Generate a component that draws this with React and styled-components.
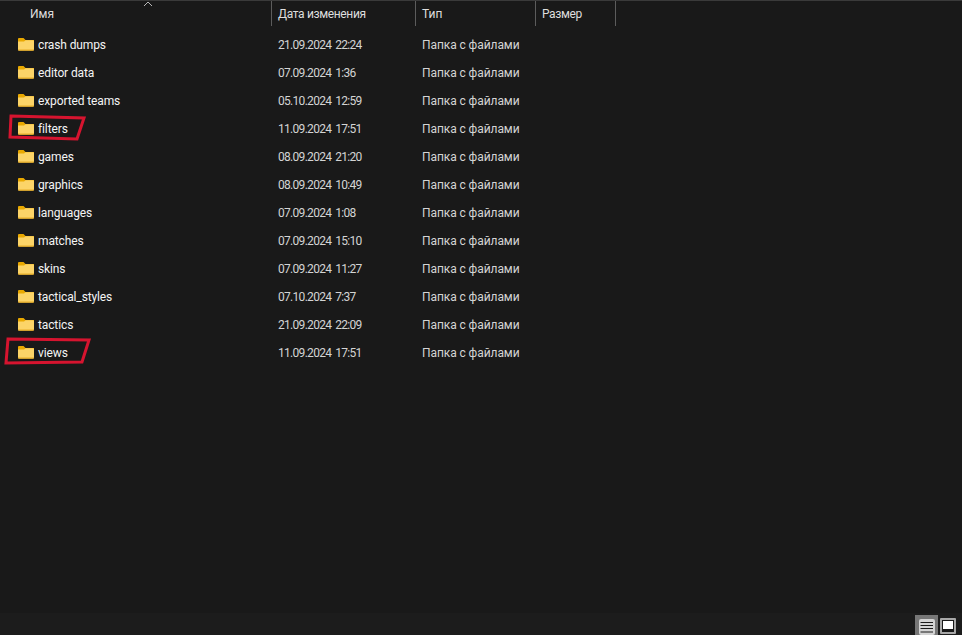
import React from 'react';
import styled, { createGlobalStyle } from 'styled-components';

const GlobalStyle = createGlobalStyle`
  html, body { margin: 0; padding: 0; height: 100%; background: #191919; overflow: hidden; }
  #root { height: 100%; }
`;

const Window = styled.div`
  position: relative;
  width: 962px;
  height: 635px;
  display: flex;
  flex-direction: column;
  background: #191919;
  color: #f0f0f0;
  font-family: Roboto, "Noto Sans", sans-serif;
  font-size: 12px;
  overflow: hidden;
`;
const Header = styled.div`
  display: flex;
  height: 25px;
  padding-left: 16px;
  border-top: 1px solid #3a3a3a;
  flex: none;
`;
const HeaderCell = styled.div`
  position: relative;
  width: ${({ w }) => w}px;
  box-sizing: border-box;
  padding-left: ${({ pad }) => pad}px;
  line-height: 27px;
  letter-spacing: ${({ spacing }) => spacing || 0}px;
  border-right: 1px solid #5c5c5c;
  color: #dedede;
  white-space: nowrap;
`;
const SortArrow = styled.svg`
  position: absolute;
  left: 127px;
  top: 0;
`;
const List = styled.div`
  flex: 1;
  padding-top: 5px;
`;
const Row = styled.div`
  display: flex;
  height: 28px;
  align-items: center;
  padding-left: 16px;
`;
const NameCell = styled.div`
  width: 256px;
  display: flex;
  align-items: center;
  gap: 4px;
  padding-left: 2px;
  box-sizing: border-box;
  color: #f4f4f4;
  letter-spacing: -0.12px;
`;
const DateCell = styled.div`
  width: 144px;
  padding-left: 6px;
  box-sizing: border-box;
  color: #d4d4d4;
  letter-spacing: -0.7px;
  word-spacing: 1.6px;
`;
const TypeCell = styled.div`
  width: 120px;
  padding-left: 6px;
  box-sizing: border-box;
  color: #d4d4d4;
  letter-spacing: -0.08px;
`;
const Footer = styled.div`
  flex: none;
  height: 22px;
  padding-right: 4px;
  display: flex;
  justify-content: flex-end;
  align-items: flex-end;
  background: #1c1c1c;
`;
const ViewButton = styled.div`
  width: ${({ w }) => w}px;
  height: 20px;
  padding: ${({ pt }) => pt}px 0 0 ${({ pl }) => pl}px;
  display: flex;
  align-items: flex-start;
  box-sizing: border-box;
  background: ${({ active }) => (active ? '#777777' : 'transparent')};
`;
const Marks = styled.svg`
  position: absolute;
  left: 0;
  top: 0;
  pointer-events: none;
`;

const rows = [
  ['crash dumps', '21.09.2024 22:24'],
  ['editor data', '07.09.2024 1:36'],
  ['exported teams', '05.10.2024 12:59'],
  ['filters', '11.09.2024 17:51'],
  ['games', '08.09.2024 21:20'],
  ['graphics', '08.09.2024 10:49'],
  ['languages', '07.09.2024 1:08'],
  ['matches', '07.09.2024 15:10'],
  ['skins', '07.09.2024 11:27'],
  ['tactical_styles', '07.10.2024 7:37'],
  ['tactics', '21.09.2024 22:09'],
  ['views', '11.09.2024 17:51'],
];

function FolderIcon() {
  return (
    <svg width="16" height="14" viewBox="0 0 16 14">
      <path d="M0 1 Q0 0 1 0 H5.5 L7.5 2 H16 V5 H0 Z" fill="#e9a800" />
      <path d="M0 3.5 H6 L7.5 2.2 H15 Q16 2.2 16 3.2 V11.5 Q16 12.5 15 12.5 H1 Q0 12.5 0 11.5 Z" fill="#fcd468" />
      <path d="M0 11.5 H16 V11.7 Q16 12.7 15 12.7 H1 Q0 12.7 0 11.7 Z" fill="#e8ae28" />
    </svg>
  );
}

function DetailsIcon() {
  return (
    <svg width="16" height="16" viewBox="0 0 16 16">
      <rect x="0" y="0" width="16" height="16" rx="2" fill="#d4d4d4" />
      <path d="M1.5 3.5H14M1.5 6.5H14M1.5 9.5H14M1.5 13H14" stroke="#1c1c1c" strokeWidth="1" />
    </svg>
  );
}

function TilesIcon() {
  return (
    <svg width="16" height="16" viewBox="0 0 16 16">
      <rect x="0" y="0" width="16" height="16" rx="1" fill="#a8a8a8" />
      <rect x="2" y="2" width="12" height="12" fill="#191919" />
      <rect x="3" y="3" width="10" height="8" fill="#ffffff" />
    </svg>
  );
}

export default function App() {
  return (
    <Window>
      <GlobalStyle />
      <Header>
        <HeaderCell w={256} pad={14}>
          Имя
          <SortArrow width="10" height="6" viewBox="0 0 10 6">
            <path d="M1 5 L5 1 L9 5" fill="none" stroke="#b8b8b8" strokeWidth="1" />
          </SortArrow>
        </HeaderCell>
        <HeaderCell w={144} pad={6} spacing={-0.35}>Дата изменения</HeaderCell>
        <HeaderCell w={120} pad={6}>Тип</HeaderCell>
        <HeaderCell w={80} pad={6} spacing={-0.4}>Размер</HeaderCell>
      </Header>
      <List>
        {rows.map(([name, date]) => (
          <Row key={name}>
            <NameCell>
              <FolderIcon />
              {name}
            </NameCell>
            <DateCell>{date}</DateCell>
            <TypeCell>Папка с файлами</TypeCell>
          </Row>
        ))}
      </List>
      <Footer>
        <ViewButton active w={23} pt={4} pl={4}><DetailsIcon /></ViewButton>
        <ViewButton w={20} pt={3} pl={2}><TilesIcon /></ViewButton>
      </Footer>
      <Marks width="962" height="635" viewBox="0 0 962 635">
        <path d="M11 116 L84 118 L77 139 L10 137 Z" fill="none" stroke="#d6142f" strokeWidth="3" />
        <path d="M8 339 L89 340 L82 362 L6 363 Z" fill="none" stroke="#d6142f" strokeWidth="3" />
      </Marks>
    </Window>
  );
}
